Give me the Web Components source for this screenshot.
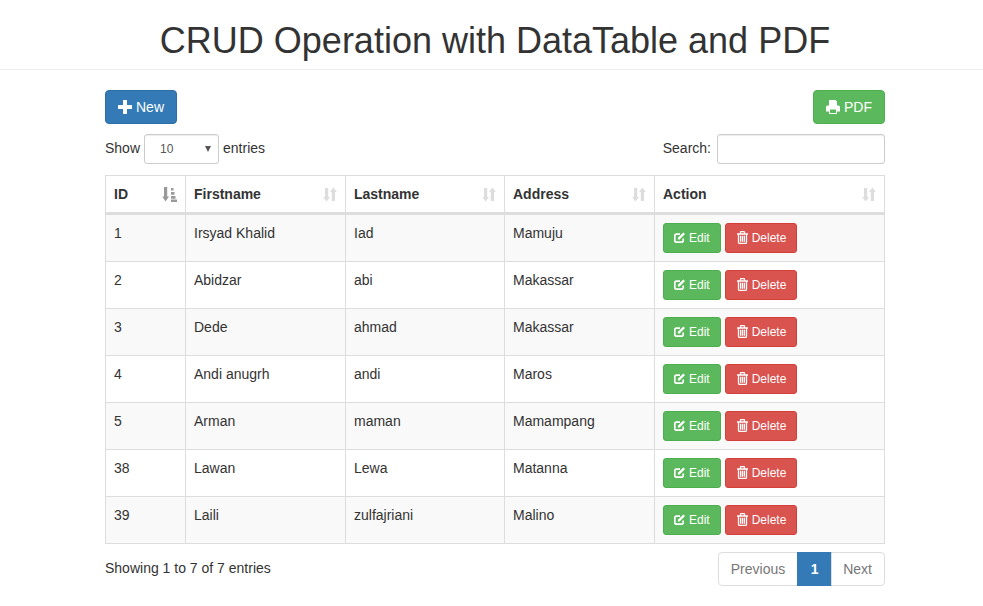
<!DOCTYPE html>
<html>
<head>
<meta charset="utf-8">
<title>CRUD Operation with DataTable and PDF</title>
<style>
    body {
        margin: 0;
        padding-left: 7px;
        background: #fff;
        color: #333;
        font-family: "Liberation Sans", Arial, sans-serif;
        font-size: 14px;
        line-height: 20px;
    }
    page-header {
        margin-left: -7px;
        padding-left: 7px;
    }
</style>
</head>
<body>
<page-header>CRUD Operation with DataTable and PDF</page-header>
<crud-page></crud-page>

<script>
const ICONS = {
    plus: `<svg viewBox="0 0 14 14" width="14" height="14"><path fill="currentColor" d="M5 0h4v5h5v4H9v5H5V9H0V5h5z"/></svg>`,
    print: `<svg viewBox="0 0 14 14" width="14" height="14"><path fill="currentColor" fill-rule="evenodd" d="M3 0h6.500L11 1.500V5.500H3zM1.500 5.500h11A1.500 1.500 0 0 1 14 7v4.500h-3V14H3v-2.500H0V7a1.500 1.500 0 0 1 1.500-1.500zM4 9.500V13h6V9.500z"/></svg>`,
    edit: `<svg viewBox="0 0 11 11" width="11" height="11"><path fill="none" stroke="currentColor" stroke-width="1.700" d="M9.200 6.500v2.200a1.500 1.500 0 0 1-1.500 1.500H2.300a1.500 1.500 0 0 1-1.500-1.500V3.700a1.500 1.500 0 0 1 1.500-1.500H6"/><path fill="currentColor" d="M9.300 .4l1.700 1.700L5.600 7.500H3.900V5.800z"/></svg>`,
    trash: `<svg viewBox="0 0 11 13" width="11" height="13"><path fill="none" stroke="currentColor" stroke-width="1.300" d="M3.500 2.500V1.200a.6 .6 0 0 1 .6-.6h2.800a.6 .6 0 0 1 .6 .6V2.500M0 3h11M1.500 3v8.300a1.100 1.100 0 0 0 1.100 1.100h5.800a1.100 1.100 0 0 0 1.100-1.100V3M3.600 4.800v6M5.500 4.800v6M7.400 4.800v6"/></svg>`,
    sort: `<svg viewBox="0 0 14 15" width="14" height="15"><path fill="#ddd" d="M2 1h3.200v9h1.800l-3.400 4.500L.2 10H2zM8.800 14V5H7L10.400 .5 13.800 5H12v9z"/></svg>`,
    sorted: `<svg viewBox="0 0 15 15" width="15" height="15"><path fill="#999" d="M2 0h3.200v9.500h1.800L3.600 14.500.2 9.500H2zM9 1h2.500v2.500H9zM9 5h3.500v2.800H9zM9 9h4.500v2.800H9zM9 12.500h6V15H9z"/></svg>`
};

class PageHeader extends HTMLElement {
    connectedCallback() {
        const shadow = this.attachShadow({mode: "open"});
        shadow.innerHTML = `
        <style>
        :host {
            display: block;
            padding-top: 21px;
            padding-bottom: 8px;
            border-bottom: 1px solid #eee;
            text-align: center;
        }
        h1 {
            margin: 0;
            font-size: 36px;
            font-weight: 500;
            line-height: 40px;
            color: #333;
        }
        </style>
        <h1><slot></slot></h1>`;
    }
}

class UiButton extends HTMLElement {
    connectedCallback() {
        const shadow = this.attachShadow({mode: "open"});
        const icon = ICONS[this.getAttribute("icon")] || "";
        shadow.innerHTML = `
        <style>
        :host {
            display: inline-flex;
            align-items: center;
            justify-content: center;
            gap: 4px;
            box-sizing: border-box;
            height: 34px;
            padding: 0 12px;
            border: 1px solid transparent;
            border-radius: 4px;
            color: #fff;
            font-size: 14px;
            cursor: pointer;
        }
        :host([size="sm"]) {
            height: 30px;
            padding: 0 10px 1px;
            font-size: 12px;
            border-radius: 3px;
        }
        :host([size="sm"][kind="danger"]) { padding-left: 11px; }
        :host([kind="primary"]) { background: #337ab7; border-color: #2e6da4; }
        :host([kind="success"]) { background: #5cb85c; border-color: #4cae4c; }
        :host([kind="danger"]) { background: #d9534f; border-color: #d43f3a; }
        svg { display: block; }
        </style>
        ${icon}<slot></slot>`;
    }
}

class DataFilters extends HTMLElement {
    connectedCallback() {
        const shadow = this.attachShadow({mode: "open"});
        shadow.innerHTML = `
        <style>
        :host {
            display: flex;
            justify-content: space-between;
            align-items: center;
            height: 30px;
            margin: 10px 0 11px;
        }
        label { display: flex; align-items: center; gap: 4px; }
        label span { padding-bottom: 2px; }
        .select, input {
            box-sizing: border-box;
            height: 30px;
            border: 1px solid #ccc;
            border-radius: 3px;
            background: #fff;
            box-shadow: inset 0 1px 1px rgba(0,0,0,.075);
        }
        .select {
            display: flex;
            align-items: center;
            justify-content: space-between;
            width: 75px;
            padding: 0 7px 0 15px;
            font-size: 12px;
            color: #555;
        }
        .select i {
            width: 0;
            height: 0;
            border: 3px solid transparent;
            border-top: 6px solid #555;
            border-bottom: 0;
        }
        input { width: 168px; margin-left: 2px; padding: 5px 10px; }
        </style>
        <label><span>Show</span> <div class="select">10<i></i></div> <span>entries</span></label>
        <label><span>Search:</span> <input type="search"></label>`;
    }
}

class SortHead extends HTMLElement {
    connectedCallback() {
        const shadow = this.attachShadow({mode: "open"});
        const icon = this.hasAttribute("sorted") ? ICONS.sorted : ICONS.sort;
        shadow.innerHTML = `
        <style>
        :host {
            display: flex;
            justify-content: space-between;
            align-items: center;
            font-weight: bold;
        }
        </style>
        <slot></slot>${icon}`;
    }
}

class DataTable extends HTMLElement {
    set rows(rows) {
        this._rows = rows;
        this.render();
    }

    connectedCallback() {
        this.shadowDOM = this.attachShadow({mode: "open"});
        this.render();
    }

    render() {
        if (!this.shadowDOM || !this._rows) return;
        const heads = ["ID", "Firstname", "Lastname", "Address", "Action"];
        this.shadowDOM.innerHTML = `
        <style>
        :host { display: block; }
        table {
            width: 100%;
            table-layout: fixed;
            border-collapse: collapse;
            border: 1px solid #ddd;
        }
        th, td {
            box-sizing: border-box;
            padding: 8px;
            border: 1px solid #ddd;
            text-align: left;
            vertical-align: top;
        }
        th {
            border-bottom-width: 3px;
            font-weight: bold;
        }
        tbody tr:nth-child(odd) { background: #f9f9f9; }
        .actions { display: flex; gap: 4px; }
        </style>
        <table>
            <colgroup>
                <col style="width:80px"><col style="width:160px"><col style="width:159px"><col style="width:150px"><col>
            </colgroup>
            <thead><tr>
                ${heads.map((h, i) => `<th><sort-head ${i === 0 ? "sorted" : ""}>${h}</sort-head></th>`).join("")}
            </tr></thead>
            <tbody>
                ${this._rows.map(r => `<tr>
                    ${r.map(c => `<td>${c}</td>`).join("")}
                    <td><div class="actions">
                        <ui-button kind="success" size="sm" icon="edit">Edit</ui-button>
                        <ui-button kind="danger" size="sm" icon="trash">Delete</ui-button>
                    </div></td>
                </tr>`).join("")}
            </tbody>
        </table>`;
    }
}

class DataPager extends HTMLElement {
    connectedCallback() {
        const shadow = this.attachShadow({mode: "open"});
        shadow.innerHTML = `
        <style>
        :host {
            display: flex;
            justify-content: space-between;
            align-items: center;
            margin-top: 8px;
        }
        span { padding-bottom: 2px; }
        ul {
            display: flex;
            margin: 0;
            padding: 0;
            list-style: none;
        }
        li {
            height: 34px;
            box-sizing: border-box;
            padding: 6px 12px;
            border: 1px solid #ddd;
            color: #777;
            margin-left: -1px;
        }
        li:first-child { border-radius: 4px 0 0 4px; }
        li:last-child { border-radius: 0 4px 4px 0; padding-left: 11px; }
        li.active {
            min-width: 35px;
            text-align: center;
            background: #337ab7;
            border-color: #337ab7;
            color: #fff;
            font-weight: bold;
        }
        </style>
        <span><slot></slot></span>
        <ul><li>Previous</li><li class="active">1</li><li>Next</li></ul>`;
    }
}

class CrudPage extends HTMLElement {
    connectedCallback() {
        const shadow = this.attachShadow({mode: "open"});
        shadow.innerHTML = `
        <style>
        :host {
            display: block;
            box-sizing: border-box;
            width: 780px;
            margin: 20px auto 0;
        }
        .toolbar { display: flex; justify-content: space-between; }
        </style>
        <div class="toolbar">
            <ui-button kind="primary" icon="plus">New</ui-button>
            <ui-button kind="success" icon="print">PDF</ui-button>
        </div>
        <data-filters></data-filters>
        <data-table></data-table>
        <data-pager>Showing 1 to 7 of 7 entries</data-pager>`;
        shadow.querySelector("data-table").rows = [
            [1, "Irsyad Khalid", "Iad", "Mamuju"],
            [2, "Abidzar", "abi", "Makassar"],
            [3, "Dede", "ahmad", "Makassar"],
            [4, "Andi anugrh", "andi", "Maros"],
            [5, "Arman", "maman", "Mamampang"],
            [38, "Lawan", "Lewa", "Matanna"],
            [39, "Laili", "zulfajriani", "Malino"]
        ];
    }
}

customElements.define("page-header", PageHeader);
customElements.define("ui-button", UiButton);
customElements.define("data-filters", DataFilters);
customElements.define("sort-head", SortHead);
customElements.define("data-table", DataTable);
customElements.define("data-pager", DataPager);
customElements.define("crud-page", CrudPage);
</script>
</body>
</html>
